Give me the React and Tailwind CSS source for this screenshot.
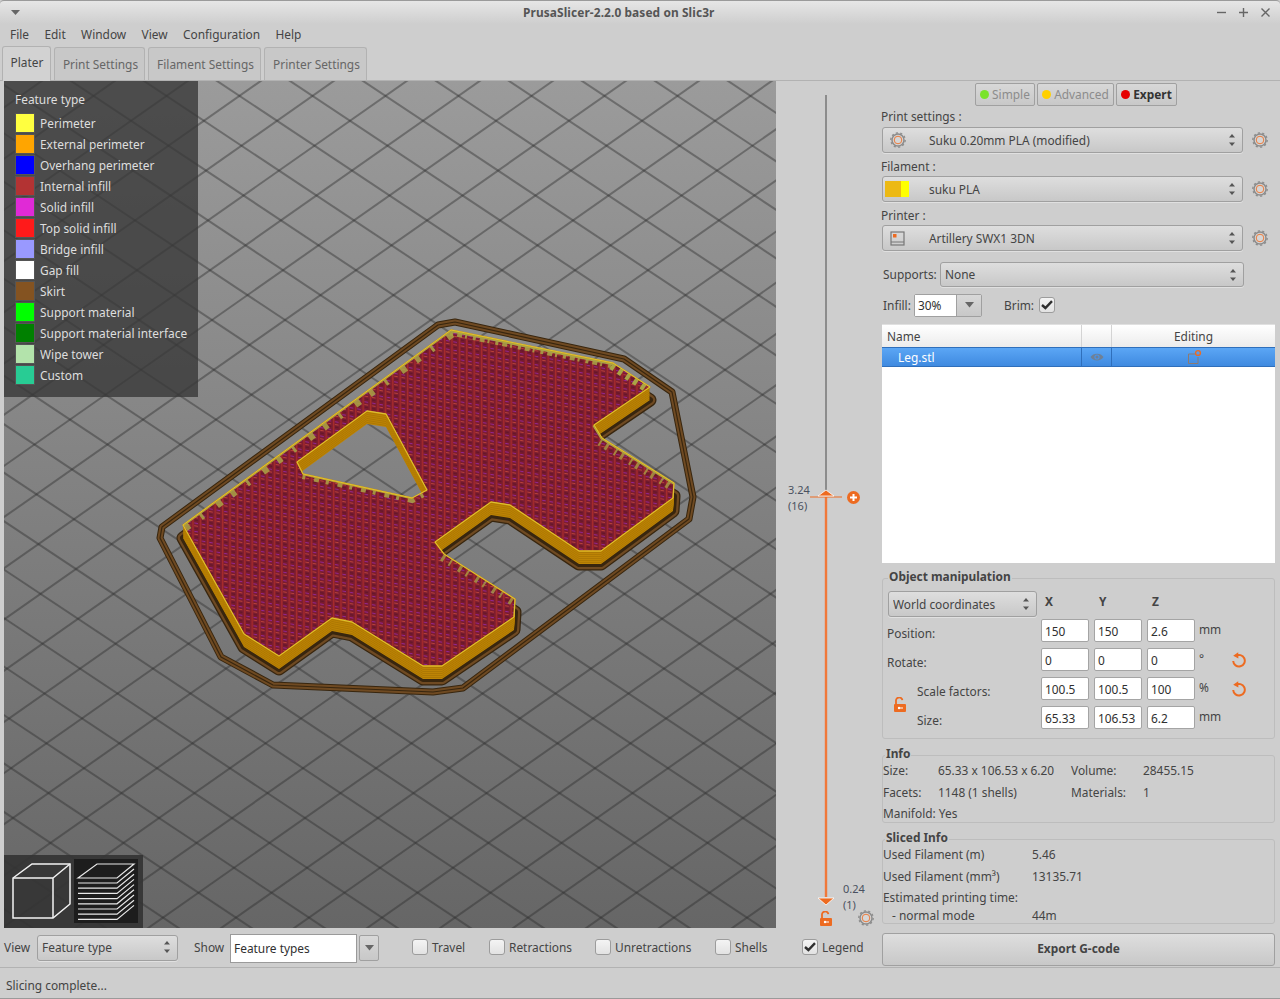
import React from "react";

const outer = [[451,330],[613,363],[650,387],[594,425],[602,438],[674,483],[673,498],[601,551],[579,551],[510,505],[491,502],[435,542],[444,554],[515,599],[514,617],[442,666],[423,666],[352,622],[332,618],[279,656],[244,634],[183,525]];
const hole = [[367,411],[386,414],[427,490],[412,498],[303,474],[297,462]];
const toD = (p) => "M" + p.map((q) => q.join(",")).join("L") + "Z";
const objectPath = toD(outer) + toD(hole);
const skirt = "M438,325 L455,322 L624,359 L672,392 L693,497 L689,519 L463,688 L433,692 L273,685 L221,657 L160,538 L162,527 Z";

function GridLines() {
  const ax = 37.5, ay = 24.9, bx = 35.5, by = -24.9, ox = 212, oy = 320;
  const lines = [];
  for (let k = -30; k <= 30; k++) {
    const p = [ox + k * bx, oy + k * by];
    lines.push([p[0] - 40 * ax, p[1] - 40 * ay, p[0] + 40 * ax, p[1] + 40 * ay]);
    const q = [ox + k * ax, oy + k * ay];
    lines.push([q[0] - 40 * bx, q[1] - 40 * by, q[0] + 40 * bx, q[1] + 40 * by]);
  }
  return (
    <g stroke="#2e2e2e" strokeOpacity="0.42" strokeWidth="2">
      {lines.map((l, i) => (
        <line key={i} x1={l[0]} y1={l[1]} x2={l[2]} y2={l[3]} />
      ))}
    </g>
  );
}

function Scene() {
  const layers = [13, 12, 11, 10, 9, 8, 7, 6, 5, 4, 3, 2, 1];
  return (
    <svg className="block w-[772px] h-[847px]" viewBox="4 81 772 847">
      <defs>
        <linearGradient id="bg" x1="0" y1="0" x2="0" y2="1">
          <stop offset="0" stopColor="#9b9b9b" />
          <stop offset="1" stopColor="#666666" />
        </linearGradient>
        <pattern id="infill" width="7.4" height="8.4" patternUnits="userSpaceOnUse" patternTransform="skewY(10)">
          <rect width="7.4" height="8.4" fill="#781a2e" />
          <rect x="2" y="1" width="3.5" height="1" fill="#96289a" />
          <rect x="2" y="3.8" width="3.5" height="1" fill="#c0453a" />
          <rect x="2" y="6.3" width="4" height="1" fill="#5f1628" />
          <rect x="0" y="0" width="1.4" height="8.4" fill="#a62b2c" />
          <rect x="6.2" y="0" width="0.8" height="8.4" fill="#8a2230" />
        </pattern>
        <clipPath id="objClip">
          <path d={objectPath} clipRule="evenodd" />
        </clipPath>
      </defs>
      <rect x="4" y="81" width="772" height="847" fill="url(#bg)" />
      <GridLines />
      <g fill="none" strokeLinejoin="round">
        <path d={skirt} stroke="#38260f" strokeWidth="7" />
        <path d={skirt} stroke="#6f4a22" strokeWidth="5" />
        <path d={skirt} stroke="#38260f" strokeWidth="1.2" />
      </g>
      <g fill="none" strokeLinejoin="round" transform="translate(0 13)">
        <path d={toD(outer)} stroke="#38260f" strokeWidth="13" />
        <path d={toD(outer)} stroke="#6f4a22" strokeWidth="10.5" />
        <path d={toD(outer)} stroke="#38260f" strokeWidth="6" />
      </g>
      {layers.map((i) => (
        <path key={i} d={objectPath} fillRule="evenodd" fill={i % 2 ? "#bd8405" : "#ad7804"} transform={`translate(0 ${i})`} />
      ))}
      <path d={objectPath} fillRule="evenodd" fill="url(#infill)" />
      <g clipPath="url(#objClip)" fill="none" stroke="#aaa446">
        <path d="M183,525 L451,330" strokeWidth="15" strokeDasharray="5 14 3 17 6 12" strokeOpacity="0.85" />
        <path d="M183,525 L451,330" strokeWidth="3" />
        <path d="M451,330 L613,363" strokeWidth="11" strokeDasharray="3 4 5 3 2 6" strokeOpacity="0.85" />
        <path d="M451,330 L613,363" strokeWidth="4.5" />
        <path d="M613,363 L650,387" strokeWidth="14" strokeDasharray="4 5" />
        <path d="M602,438 L674,483" strokeWidth="17" strokeDasharray="2 5 3 8" strokeOpacity="0.75" />
        <path d="M444,554 L515,599" strokeWidth="15" strokeDasharray="3 6 2 9" strokeOpacity="0.75" />
        <path d="M303,474 L412,498 L427,490" strokeWidth="10" strokeDasharray="3 9 5 7" strokeOpacity="0.85" />
        <path d="M303,474 L412,498" strokeWidth="2.5" />
        <path d="M594,425 L602,438 L674,483" strokeWidth="3.5" />
      </g>
      <path d={objectPath} fill="none" stroke="#d99500" strokeWidth="1.4" strokeLinejoin="round" />
      <path d={objectPath} fill="none" stroke="#d8d850" strokeWidth="0.7" strokeLinejoin="round" />
    </svg>
  );
}

const legend = [
  ["#ffff40", "Perimeter"],
  ["#ffa500", "External perimeter"],
  ["#0000ff", "Overhang perimeter"],
  ["#b33333", "Internal infill"],
  ["#e02ad6", "Solid infill"],
  ["#ff1a1a", "Top solid infill"],
  ["#9999ff", "Bridge infill"],
  ["#ffffff", "Gap fill"],
  ["#845321", "Skirt"],
  ["#00ff00", "Support material"],
  ["#008000", "Support material interface"],
  ["#b3e3ab", "Wipe tower"],
  ["#28cc94", "Custom"],
];

function Legend() {
  return (
    <div className="absolute left-0 top-0 w-[194px] h-[316px] bg-[#383838]/80 text-[#dedede] pl-[11px] pt-[9px]">
      <div className="h-[20px] leading-[18px]">Feature type</div>
      <div className="flex flex-col gap-[1px] mt-[3px]">
        {legend.map(([c, t]) => (
          <div key={t} className="flex items-center h-[20px] gap-[5px]">
            <span className="w-[20px] h-[20px] border border-[#555]" style={{ background: c }} />
            <span>{t}</span>
          </div>
        ))}
      </div>
    </div>
  );
}

function ViewToolbar() {
  return (
    <div className="absolute left-0 bottom-0 w-[139px] h-[73px] bg-[#333333]/90">
      <svg className="absolute left-[7px] top-[6px]" width="60" height="60" viewBox="0 0 60 60" fill="none" stroke="#f2f2f2" strokeWidth="1.3">
        <path d="M2,17 L21,3 L59,3 L59,43 L42,57 L2,57 Z" strokeWidth="1.5" />
        <path d="M2,17 L42,17 L42,57 M42,17 L59,3" strokeWidth="1.5" />
      </svg>
      <div className="absolute left-[70px] top-[4px] w-[64px] h-[64px] bg-[#1d1d1d]">
        <svg width="64" height="64" viewBox="0 0 64 64" fill="none" stroke="#e8e8e8" strokeWidth="1.2">
          <path d="M4,19 L23,5 L60,5 L43,19 Z" />
          {[0, 1, 2, 3, 4, 5, 6, 7].map((i) => (
            <path key={i} d={`M4,${24 + i * 5.2} L43,${24 + i * 5.2} L60,${10 + i * 5.2}`} />
          ))}
        </svg>
      </div>
    </div>
  );
}

function UpDown() {
  return (
    <svg width="8" height="14" viewBox="0 0 8 14" className="shrink-0" fill="#555">
      <path d="M4,1 L7,4.5 L1,4.5 Z" />
      <path d="M4,13 L7,9.5 L1,9.5 Z" />
    </svg>
  );
}

function Gear({ size = 16 }) {
  return (
    <svg width={size} height={size} viewBox="0 0 16 16" fill="none" className="shrink-0">
      <circle cx="8" cy="8" r="6" stroke="#8c8c8c" strokeWidth="1.5" fill="#d6d6d6" />
      <circle cx="8" cy="8" r="7.2" stroke="#8c8c8c" strokeWidth="1.3" strokeDasharray="2.2 2.3" />
      <circle cx="8" cy="8" r="3.8" stroke="#ec7a3a" strokeWidth="1" />
    </svg>
  );
}

function Lock() {
  return (
    <svg width="14" height="15" viewBox="0 0 14 15" className="shrink-0">
      <path d="M3,7 V4.2 A3.2,3.2 0 0 1 9.4,3.2" stroke="#ed6b21" strokeWidth="1.8" fill="none" />
      <rect x="1" y="7" width="12" height="8" rx="1" fill="#ed6b21" />
      <circle cx="6" cy="11" r="1.2" fill="#fff" />
      <rect x="6" y="10.5" width="4" height="1" fill="#fff" />
    </svg>
  );
}

function Reset() {
  return (
    <svg width="16" height="16" viewBox="0 0 16 16" fill="none" className="shrink-0">
      <path d="M4.6,4 A5.8,5.8 0 1 1 2.2,9" stroke="#ed6b21" strokeWidth="2" />
      <path d="M7.2,0.2 L2.2,3.8 L7.4,6.6 Z" fill="#ed6b21" />
    </svg>
  );
}

function Combo({ className = "", children, icon }) {
  return (
    <div className={`flex items-center border border-[#a0a0a0] rounded-[3px] bg-gradient-to-b from-[#dedede] to-[#c8c8c8] shadow-[0_1px_0_#e0e0e0] ${className}`}>
      {icon}
      <span className="flex-1 truncate">{children}</span>
      <span className="pr-[6px]"><UpDown /></span>
    </div>
  );
}

function PresetRow({ label, value, icon, first }) {
  return (
    <>
      <div className={`${first ? "h-[21px]" : "h-[23px] pt-[3px]"} flex items-center`}>{label}</div>
      <div className="flex items-center">
        <Combo className="ml-[1px] w-[361px] h-[26px]" icon={<span className="w-[46px] pl-[2px] flex items-center shrink-0">{icon}</span>}>
          {value}
        </Combo>
        <span className="ml-[9px]"><Gear /></span>
      </div>
    </>
  );
}

function ModeButton({ dot, children, active, className }) {
  return (
    <div className={`flex items-center justify-center gap-[3px] h-[23px] border border-[#a0a0a0] rounded-[2px] bg-gradient-to-b from-[#d8d8d8] to-[#c8c8c8] ${active ? "font-bold text-[#333]" : "text-[#8c8c8c]"} ${className}`}>
      <span className="w-[9px] h-[9px] rounded-full" style={{ background: dot }} />
      {children}
    </div>
  );
}

function Check({ checked, className = "" }) {
  return (
    <span className={`flex items-center justify-center w-[16px] h-[16px] border border-[#9c9c9c] rounded-[3px] bg-gradient-to-b from-[#f4f4f4] to-[#e2e2e2] shrink-0 ${className}`}>
      {checked && (
        <svg width="12" height="10" viewBox="0 0 12 10" fill="none" stroke="#2f2f2f" strokeWidth="2.4">
          <path d="M1,5 L4.4,8 L11,1.2" />
        </svg>
      )}
    </span>
  );
}

function Num({ children }) {
  return (
    <div className="w-[48px] h-[23px] px-[3px] pt-[1px] flex items-center bg-white border border-[#a4a4a4] rounded-[2px] text-[#303030]">{children}</div>
  );
}

function CoordRow({ left, vals, unit, reset, mt }) {
  return (
    <div className={`flex items-center h-[23px] ${mt}`}>
      <div className="w-[154px] shrink-0 pt-[6px]">{left}</div>
      <div className="flex gap-[5px]">
        {vals.map((v, i) => <Num key={i}>{v}</Num>)}
      </div>
      <div className="w-[36px] pl-[4px] shrink-0 -mt-[3px]">{unit}</div>
      {reset && <Reset />}
    </div>
  );
}

function Group({ title, className, labelLeft, children }) {
  return (
    <div className={`relative border border-[#bdbdbd] rounded-[3px] ${className}`}>
      <div className={`absolute ${labelLeft} -top-[11px] bg-[#cecece] px-[1px] leading-[17px] font-bold text-[#444]`}>{title}</div>
      {children}
    </div>
  );
}

function CheckItem({ label, checked, w }) {
  return (
    <label className={`flex items-center gap-[4px] ${w}`}>
      <Check checked={checked} />
      <span>{label}</span>
    </label>
  );
}

export default function App() {
  return (
    <div className="w-[1280px] h-[999px] overflow-hidden flex flex-col bg-[#cecece] text-[#444444] text-[11.9px] leading-[17px] font-['Noto_Sans',sans-serif]">
      {/* title bar */}
      <div className="h-[24px] shrink-0 flex items-center bg-gradient-to-b from-[#e6e6e6] to-[#cecece] border-t border-[#9a9a9a] rounded-t-[4px]">
        <svg width="9" height="6" viewBox="0 0 9 6" className="ml-[11px]"><path d="M0,0 H9 L4.5,5 Z" fill="#666" /></svg>
        <div className="ml-[503px] font-bold text-[#555] tracking-[0.1px]">PrusaSlicer-2.2.0 based on Slic3r</div>
        <div className="ml-auto mr-[10px] flex gap-[13px] items-center text-[#666]">
          <svg width="9" height="9" viewBox="0 0 9 9"><path d="M0,4.5 H9" stroke="#666" strokeWidth="1.4" /></svg>
          <svg width="9" height="9" viewBox="0 0 9 9"><path d="M0,4.5 H9 M4.5,0 V9" stroke="#666" strokeWidth="1.4" /></svg>
          <svg width="9" height="9" viewBox="0 0 9 9"><path d="M0.5,0.5 L8.5,8.5 M8.5,0.5 L0.5,8.5" stroke="#666" strokeWidth="1.4" /></svg>
        </div>
      </div>
      {/* menu */}
      <div className="h-[21px] shrink-0 flex items-center pl-[10px] gap-[15.4px]">
        {["File", "Edit", "Window", "View", "Configuration", "Help"].map((m) => <span key={m}>{m}</span>)}
      </div>
      {/* tabs */}
      <div className="h-[36px] shrink-0 flex items-end pl-[2px] border-b border-[#b2b2b2]">
        <div className="h-[35px] w-[49px] -mb-[1px] pl-[1px] flex items-center justify-center bg-[#d2d2d2] border border-b-0 border-[#b2b2b2] rounded-t-[3px] pb-[3px]">Plater</div>
        <div className="flex ml-[3px] gap-[3px] text-[#666]">
          <div className="h-[33px] w-[91px] pl-[2px] flex items-center justify-center border border-b-0 border-[#b2b2b2] rounded-t-[3px] bg-[#c8c8c8]">Print Settings</div>
          <div className="h-[33px] w-[113px] pl-[2px] flex items-center justify-center border border-b-0 border-[#b2b2b2] rounded-t-[3px] bg-[#c8c8c8]">Filament Settings</div>
          <div className="h-[33px] w-[103px] pl-[2px] flex items-center justify-center border border-b-0 border-[#b2b2b2] rounded-t-[3px] bg-[#c8c8c8]">Printer Settings</div>
        </div>
      </div>
      {/* body */}
      <div className="flex h-[887px] shrink-0 pl-[4px] border-b border-[#b2b2b2]">
        <div className="w-[872px] shrink-0 flex flex-col">
          <div className="flex h-[847px] shrink-0">
            <div className="relative w-[772px] h-[847px] shrink-0">
              <Scene />
              <Legend />
              <ViewToolbar />
            </div>
            {/* layer slider */}
            <div className="relative w-[100px] h-[847px] shrink-0 text-[11px] leading-[16px] text-[#4a5160]">
              <svg className="absolute left-0 top-0" width="100" height="847" viewBox="0 0 100 847">
                <path d="M50,14 V412" stroke="#8c8c8c" strokeWidth="2" />
                <path d="M50,416 V816" stroke="#f0783a" strokeWidth="2.4" />
                <path d="M34,416 H66" stroke="#ed6b21" strokeWidth="1" />
                <path d="M42,415 L50,409 L58,415 Z" fill="#ed6b21" stroke="#fff" strokeWidth="0.8" />
                <path d="M42,817 L58,817 L50,824 Z" fill="#ed6b21" stroke="#fff" strokeWidth="0.8" />
              </svg>
              <div className="absolute left-[12px] top-[401px]">3.24</div>
              <div className="absolute left-[12px] top-[417px]">(16)</div>
              <div className="absolute left-[71px] top-[410px] w-[13px] h-[13px] rounded-full bg-[#ed6b21] flex items-center justify-center">
                <svg width="7" height="7" viewBox="0 0 7 7"><path d="M0,3.5 H7 M3.5,0 V7" stroke="#fff" strokeWidth="2" /></svg>
              </div>
              <div className="absolute left-[67px] top-[800px]">0.24</div>
              <div className="absolute left-[67px] top-[816px]">(1)</div>
              <div className="absolute left-[43px] top-[830px]"><Lock /></div>
              <div className="absolute left-[82px] top-[829px]"><Gear /></div>
            </div>
          </div>
          {/* bottom bar */}
          <div className="flex items-center h-[40px] shrink-0 [&_span]:-translate-y-[1px]">
            <span className="w-[33px]">View</span>
            <Combo className="w-[141px] h-[26px] pl-[4px]">Feature type</Combo>
            <span className="ml-[16px] w-[36px]">Show</span>
            <div className="w-[127px] h-[29px] px-[3px] flex items-center bg-white border border-[#9a9a9a] text-[#303030]">Feature types</div>
            <div className="ml-[2px] w-[20px] h-[26px] flex items-center justify-center border border-[#a0a0a0] rounded-[2px] bg-gradient-to-b from-[#d8d8d8] to-[#c8c8c8]">
              <svg width="9" height="6" viewBox="0 0 9 6"><path d="M0,0 H9 L4.5,5.5 Z" fill="#666" /></svg>
            </div>
            <div className="flex items-center ml-[33px]">
              <CheckItem label="Travel" w="w-[77px]" />
              <CheckItem label="Retractions" w="w-[106px]" />
              <CheckItem label="Unretractions" w="w-[120px]" />
              <CheckItem label="Shells" w="w-[87px]" />
              <CheckItem label="Legend" checked />
            </div>
          </div>
        </div>
        {/* right panel */}
        <div className="w-[395px] ml-[5px] shrink-0 flex flex-col">
          <div className="flex gap-[2px] ml-[94px] mt-[2px]">
            <ModeButton dot="#7ae32a" className="w-[60px]">Simple</ModeButton>
            <ModeButton dot="#ffd000" className="w-[77px]">Advanced</ModeButton>
            <ModeButton dot="#e60000" active className="w-[61px]">Expert</ModeButton>
          </div>
          <PresetRow first label="Print settings :" value="Suku 0.20mm PLA (modified)" icon={<span className="ml-[5px]"><Gear /></span>} />
          <PresetRow label="Filament :" value="suku PLA" icon={<span className="flex w-[24px] h-[16px]"><span className="w-[16px] bg-[#ecb914]" /><span className="w-[8px] bg-[#ffff00]" /></span>} />
          <PresetRow
            label="Printer :"
            value="Artillery SWX1 3DN"
            icon={
              <svg width="15" height="15" viewBox="0 0 15 15" fill="none" className="ml-[5px]">
                <rect x="1" y="1" width="13" height="13" stroke="#777" strokeWidth="1.2" />
                <path d="M1,11 H14" stroke="#777" />
                <rect x="3" y="3" width="3.5" height="3.5" fill="#ed6b21" />
              </svg>
            }
          />
          <div className="flex items-center mt-[11px] h-[25px] pl-[2px]">
            <span className="w-[57px]">Supports:</span>
            <Combo className="w-[304px] h-[25px] pl-[4px]">None</Combo>
          </div>
          <div className="flex items-center mt-[7px] h-[22px] pl-[2px]">
            <span className="w-[31px]">Infill:</span>
            <div className="flex w-[68px] h-[23px] border border-[#a0a0a0] rounded-[2px]">
              <div className="w-[41px] bg-white px-[3px] flex items-center text-[#303030]">30%</div>
              <div className="flex-1 flex items-center justify-center border-l border-[#a0a0a0] bg-gradient-to-b from-[#d8d8d8] to-[#c8c8c8]">
                <svg width="9" height="6" viewBox="0 0 9 6"><path d="M0,0 H9 L4.5,5.5 Z" fill="#666" /></svg>
              </div>
            </div>
            <span className="ml-[22px] w-[35px]">Brim:</span>
            <Check checked />
          </div>
          {/* object list */}
          <div className="mt-[8px] ml-[1px] w-[393px] h-[239px] shrink-0 bg-white border-t border-[#e0e0e0]">
            <div className="flex h-[22px] bg-gradient-to-b from-[#ffffff] to-[#ececec]">
              <div className="w-[200px] pl-[5px] flex items-center border-r border-[#d4d4d4]">Name</div>
              <div className="w-[30px] border-r border-[#d4d4d4]" />
              <div className="flex-1 flex items-center justify-center">Editing</div>
            </div>
            <div className="flex h-[20px] bg-gradient-to-b from-[#5ba6f5] to-[#3f8ae0] border-y border-[#2f6fbb] text-white">
              <div className="w-[200px] pl-[16px] flex items-center border-r border-[#2f6fbb]">Leg.stl</div>
              <div className="w-[30px] flex items-center justify-center border-r border-[#2f6fbb]">
                <svg width="14" height="10" viewBox="0 0 14 10">
                  <path d="M0.5,5 C3,0.5 11,0.5 13.5,5 C11,9.5 3,9.5 0.5,5 Z" fill="#6f8095" />
                  <circle cx="7" cy="5" r="2.6" fill="#4a93e8" />
                  <circle cx="7" cy="5" r="1.5" fill="#6f8095" />
                </svg>
              </div>
              <div className="flex-1 flex items-center justify-center">
                <svg width="16" height="16" viewBox="0 0 16 16" fill="none">
                  <path d="M10,5 H2.5 V14.5 H12 V8" stroke="#8c7a72" strokeWidth="1" />
                  <circle cx="12" cy="4" r="2.4" stroke="#ed6b21" strokeWidth="1.4" />
                </svg>
              </div>
            </div>
          </div>
          {/* object manipulation */}
          <Group title="Object manipulation" labelLeft="left-[5px]" className="mt-[15px] ml-[1px] w-[393px] h-[161px] shrink-0">
            <div className="flex items-start pt-[12px] pl-[5px]">
              <Combo className="w-[149px] h-[26px] pl-[4px]">World coordinates</Combo>
              <div className="flex font-bold ml-[8px] pt-[2px]">
                <span className="w-[54px]">X</span>
                <span className="w-[53px]">Y</span>
                <span>Z</span>
              </div>
            </div>
            <div className="pl-[4px]">
              <CoordRow mt="mt-[2px]" left="Position:" vals={["150", "150", "2.6"]} unit="mm" />
              <CoordRow mt="mt-[6px]" left="Rotate:" vals={["0", "0", "0"]} unit="°" reset />
              <div className="flex mt-[6px]">
                <div className="w-[30px] shrink-0 flex items-center pl-[6px] pt-[3px]"><Lock /></div>
                <div className="flex flex-col gap-[6px]">
                  <div className="flex items-center h-[23px]">
                    <div className="w-[124px] shrink-0 pt-[6px]">Scale factors:</div>
                    <div className="flex gap-[5px]">
                      <Num>100.5</Num><Num>100.5</Num><Num>100</Num>
                    </div>
                    <div className="w-[36px] pl-[4px] -mt-[3px]">%</div>
                    <Reset />
                  </div>
                  <div className="flex items-center h-[23px]">
                    <div className="w-[124px] shrink-0 pt-[6px]">Size:</div>
                    <div className="flex gap-[5px]">
                      <Num>65.33</Num><Num>106.53</Num><Num>6.2</Num>
                    </div>
                    <div className="w-[36px] pl-[4px] -mt-[3px]">mm</div>
                  </div>
                </div>
              </div>
            </div>
          </Group>
          {/* info */}
          <Group title="Info" labelLeft="left-[2px]" className="mt-[16px] ml-[1px] w-[393px] h-[68px] shrink-0">
            <div className="pt-[6px]">
              <div className="flex h-[22px] items-start">
                <span className="w-[55px]">Size:</span>
                <span className="w-[133px]">65.33 x 106.53 x 6.20</span>
                <span className="w-[72px]">Volume:</span>
                <span>28455.15</span>
              </div>
              <div className="flex h-[21px] items-start">
                <span className="w-[55px]">Facets:</span>
                <span className="w-[133px]">1148 (1 shells)</span>
                <span className="w-[72px]">Materials:</span>
                <span>1</span>
              </div>
              <div>Manifold: Yes</div>
            </div>
          </Group>
          {/* sliced info */}
          <Group title="Sliced Info" labelLeft="left-[2px]" className="mt-[16px] ml-[1px] w-[393px] h-[85px] shrink-0">
            <div className="pt-[6px]">
              <div className="flex h-[22px]"><span className="w-[149px]">Used Filament (m)</span><span>5.46</span></div>
              <div className="flex h-[21px]"><span className="w-[149px]">Used Filament (mm³)</span><span>13135.71</span></div>
              <div className="h-[18px]">Estimated printing time:</div>
              <div className="flex h-[17px]"><span className="w-[149px] pl-[9px]">- normal mode</span><span>44m</span></div>
            </div>
          </Group>
          <div className="mt-[9px] ml-[1px] w-[393px] h-[33px] shrink-0 pb-[2px] flex items-center justify-center font-bold border border-[#a0a0a0] rounded-[3px] bg-gradient-to-b from-[#dedede] to-[#c8c8c8]">Export G-code</div>
        </div>
      </div>
      {/* status bar */}
      <div className="flex-1 flex items-center pl-[6px] pt-[4px] border-b border-[#9a9a9a]">Slicing complete...</div>
    </div>
  );
}
